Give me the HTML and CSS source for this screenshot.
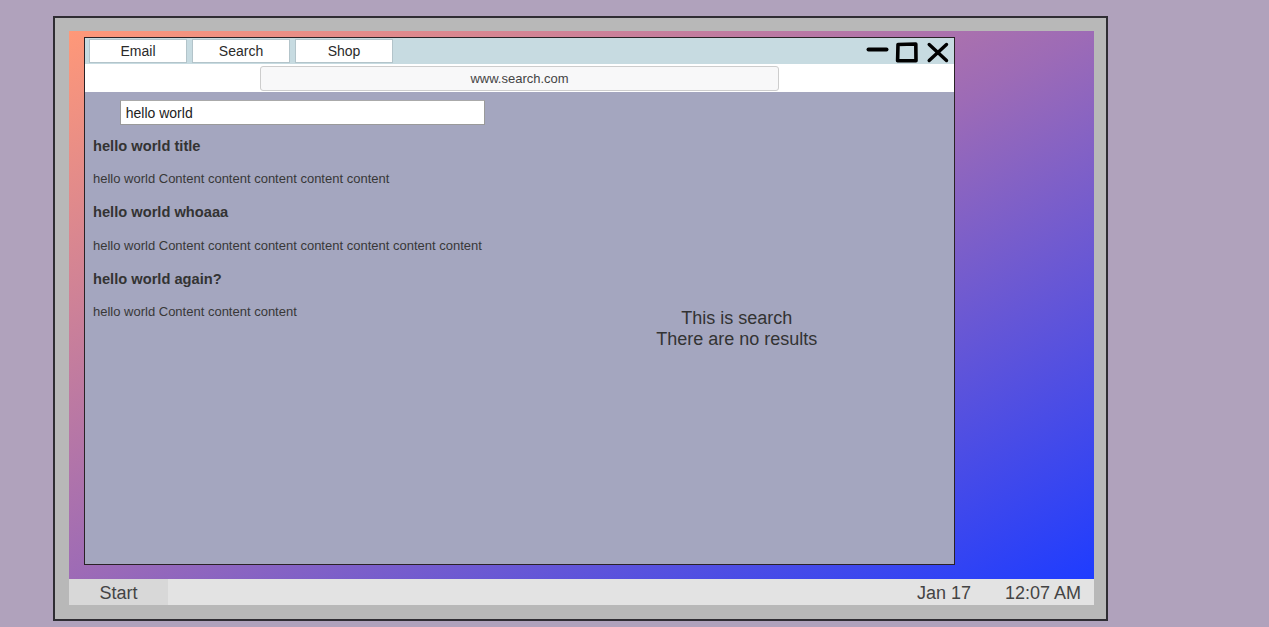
FILE: index.html
```html
<!DOCTYPE html>
<html>
<head>
<meta charset="utf-8">
<link rel="stylesheet" href="styles.css">
</head>
<body>
<div class="monitor">
  <div class="screen">
    <div class="window">
      <div class="tabbar">
        <div class="tab">Email</div>
        <div class="tab">Search</div>
        <div class="tab">Shop</div>
        <svg class="controls" width="84" height="22" viewBox="0 0 84 22">
          <path d="M2.5 8.6 L20.5 8.6" stroke="#000" stroke-width="4" stroke-linecap="round" fill="none"/>
          <path d="M32 3.5 L49.8 3 L50 19.8 L31.6 19.8 Z" stroke="#000" stroke-width="3.6" stroke-linejoin="round" fill="none"/>
          <path d="M63.2 3.5 L80.5 19.5 M80.5 3.5 L63.2 19.5" stroke="#000" stroke-width="3.4" stroke-linecap="round" fill="none"/>
        </svg>
      </div>
      <div class="addressrow">
        <div class="address">www.search.com</div>
      </div>
      <div class="content">
        <div class="results">
          <div class="searchbox">hello world</div>
          <div class="list">
            <div class="title">hello world title</div>
            <div class="text">hello world Content content content content content</div>
            <div class="title">hello world whoaaa</div>
            <div class="text">hello world Content content content content content content content</div>
            <div class="title">hello world again?</div>
            <div class="text">hello world Content content content</div>
          </div>
        </div>
        <div class="side">
          <div class="message">This is search<br>There are no results</div>
        </div>
      </div>
    </div>
  </div>
  <div class="taskbar">
    <div class="start">Start</div>
    <div class="tray">
      <span>Jan 17</span>
      <span>12:07 AM</span>
    </div>
  </div>
</div>
</body>
</html>
```

FILE: styles.css
```css
html, body {
  margin: 0;
  padding: 0;
}
body {
  background: #b0a2bc;
  font-family: "Liberation Sans", Arial, sans-serif;
  width: 1269px;
  height: 627px;
  overflow: hidden;
}
.monitor {
  box-sizing: border-box;
  margin: 16px 0 0 53px;
  width: 1055px;
  height: 605px;
  border: 2px solid #2f2d33;
  background: #b8b8b8;
  padding: 13px 12px 14px 14px;
  display: flex;
  flex-direction: column;
}
.screen {
  box-sizing: border-box;
  height: 548px;
  padding: 6px 0 0 15px;
  background: linear-gradient(to bottom right, #ff9878 0%, #9d6bb6 50%, #1e3cff 100%);
}
.window {
  box-sizing: border-box;
  width: 871px;
  height: 528px;
  border: 1px solid #2a2226;
  display: flex;
  flex-direction: column;
}
.tabbar {
  height: 26px;
  background: #c7dbe1;
  display: flex;
  align-items: flex-start;
  padding: 1px 0 0 4px;
  box-sizing: border-box;
}
.tab {
  box-sizing: border-box;
  width: 98px;
  height: 24px;
  margin-right: 5px;
  background: #fff;
  border: 1px solid #b3c4ca;
  font-size: 14px;
  color: #2a2a2a;
  display: flex;
  align-items: center;
  justify-content: center;
}
.controls {
  margin-left: auto;
  margin-right: 4px;
  margin-top: 2px;
}
.addressrow {
  height: 28px;
  box-sizing: border-box;
  background: #fff;
  padding-top: 2px;
  display: flex;
  justify-content: center;
}
.address {
  box-sizing: border-box;
  width: 519px;
  height: 25px;
  border: 1px solid #cdcdcd;
  border-radius: 3px;
  background: #f8f8f9;
  font-size: 13px;
  color: #444;
  display: flex;
  align-items: center;
  justify-content: center;
}
.content {
  flex: 1;
  background: #a4a6bf;
  display: grid;
  grid-template-columns: 1fr 1fr;
}
.results {
  padding-top: 8px;
}
.searchbox {
  box-sizing: border-box;
  width: 365px;
  height: 25px;
  margin: 0 auto;
  background: #fff;
  border: 1px solid #9a9a9a;
  border-top-color: #aaa;
  font-size: 14px;
  color: #222;
  padding-left: 5px;
  display: flex;
  align-items: center;
}
.list {
  margin-top: 12px;
  padding-left: 8px;
  display: flex;
  flex-direction: column;
}
.title {
  font-size: 14.67px;
  line-height: 19px;
  font-weight: bold;
  color: #333;
}
.title + .text {
  margin-top: 15.1px;
}
.text + .title {
  margin-top: 17.4px;
}
.text {
  font-size: 13px;
  line-height: 15px;
  color: #383838;
}
.side {
  display: flex;
  align-items: center;
  justify-content: center;
  padding-top: 2px;
}
.message {
  font-size: 18px;
  line-height: 21px;
  color: #333;
  text-align: center;
}
.taskbar {
  height: 26px;
  box-sizing: border-box;
  background: #e3e3e3;
  display: flex;
  align-items: stretch;
  font-size: 18px;
  color: #444;
}
.start {
  width: 99px;
  background: #d8d8d8;
  display: flex;
  align-items: center;
  justify-content: center;
  padding-top: 2px;
}
.tray {
  margin-left: auto;
  display: flex;
  align-items: center;
  gap: 34px;
  padding-right: 13px;
  padding-top: 2px;
}
```
